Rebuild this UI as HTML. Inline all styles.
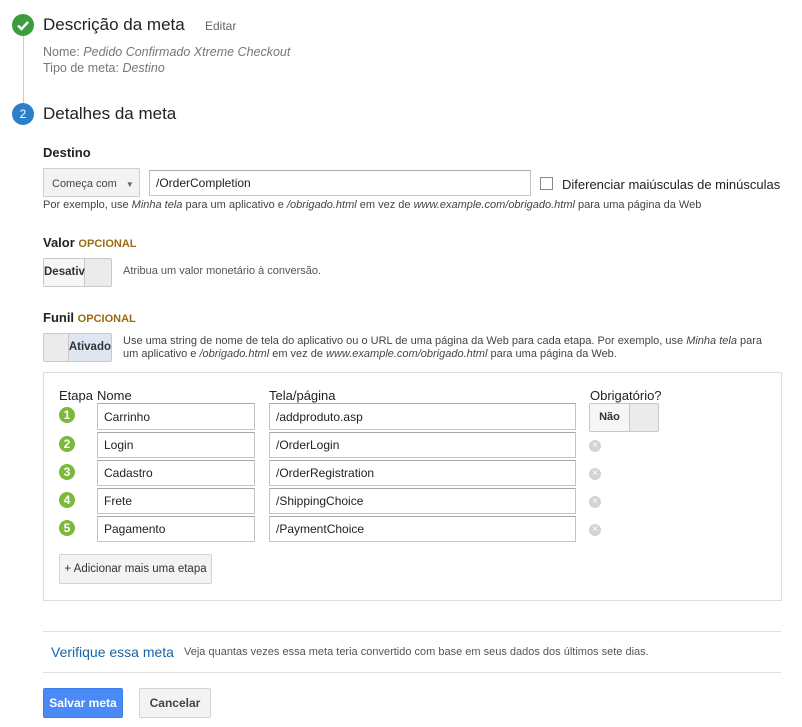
<!DOCTYPE html>
<html><head><meta charset="utf-8"><style>
*{box-sizing:border-box;margin:0;padding:0}
body{width:802px;height:727px;background:#fff;font-family:"Liberation Sans",Arial,sans-serif;color:#222;position:relative;overflow:hidden}
.a{position:absolute;white-space:nowrap}
.inp{position:absolute;border:1px solid #c4c4c4;border-top-color:#a8a8a8;background:#fff;font-size:12px;padding-left:6px;display:flex;align-items:center}
.tog{position:absolute;border:1px solid #c8c8c8;border-radius:2px;background:#ebebeb;display:flex;font-size:11px;font-weight:bold;color:#333}
.n{position:absolute;width:16px;height:16px;border-radius:50%;background:#7cb83b;color:#fff;font-size:12px;font-weight:bold;text-align:center;line-height:16px}
.x{position:absolute;width:12px;height:12px;border-radius:50%;background:#d4d4d4;color:#fff;font-size:10px;text-align:center;line-height:12px}
.btn{position:absolute;border:1px solid #d4d4d4;background:#f3f3f3;border-radius:2px;font-size:12px;font-weight:bold;color:#444;display:flex;align-items:center;justify-content:center}
.hr{position:absolute;left:43px;width:738px;height:1px;background:#e0e0e0}
.op{color:#9b6a12;font-size:11px;font-weight:bold}
</style></head><body>
<div class="a" style="left:23px;top:36px;width:1px;height:68px;background:#ccc"></div>
<svg class="a" style="left:12px;top:14px" width="22" height="22"><circle cx="11" cy="11" r="11" fill="#3b9d3b"/><path d="M6 11.5l3.5 3.5 6.5-7" stroke="#fff" stroke-width="2.4" fill="none"/></svg>
<div class="a" style="left:43px;top:15px;font-size:17px;color:#222">Descrição da meta</div>
<div class="a" style="left:205px;top:19px;font-size:12px;color:#666">Editar</div>
<div class="a" style="left:43px;top:45px;font-size:12.5px;color:#777">Nome: <i>Pedido Confirmado Xtreme Checkout</i></div>
<div class="a" style="left:43px;top:61px;font-size:12.5px;color:#777">Tipo de meta: <i>Destino</i></div>
<div class="a" style="left:12px;top:103px;width:22px;height:22px;border-radius:50%;background:#2a7fc7;color:#fff;font-size:12px;text-align:center;line-height:22px">2</div>
<div class="a" style="left:43px;top:104px;font-size:17px">Detalhes da meta</div>
<div class="a" style="left:43px;top:145px;font-size:13px;font-weight:bold">Destino</div>
<div class="a" style="left:43px;top:168px;width:97px;height:29px;border:1px solid #d0d0d0;background:#f3f3f3;font-size:11px;color:#444;padding:9px 0 0 8px">Começa com <span style="font-size:8px;color:#666;margin-left:6px">▼</span></div>
<div class="inp" style="left:149px;top:170px;width:382px;height:26px">/OrderCompletion</div>
<div class="a" style="left:540px;top:177px;width:13px;height:13px;border:1px solid #888;background:#fff"></div>
<div class="a" style="left:562px;top:177px;font-size:13px">Diferenciar maiúsculas de minúsculas</div>
<div class="a" style="left:43px;top:199px;font-size:11px;color:#444">Por exemplo, use <i>Minha tela</i> para um aplicativo e <i>/obrigado.html</i> em vez de <i>www.example.com/obrigado.html</i> para uma página da Web</div>
<div class="a" style="left:43px;top:235px;font-size:13px;font-weight:bold">Valor <span class="op">OPCIONAL</span></div>
<div class="tog" style="left:43px;top:258px;width:69px;height:29px"><div style="width:41px;background:#f6f6f6;border-right:1px solid #c8c8c8;line-height:27px;padding-left:0;font-size:11.5px">Desativ</div></div>
<div class="a" style="left:123px;top:265px;font-size:11px;color:#555">Atribua um valor monetário à conversão.</div>
<div class="a" style="left:43px;top:310px;font-size:13px;font-weight:bold">Funil <span class="op">OPCIONAL</span></div>
<div class="tog" style="left:43px;top:333px;width:69px;height:29px"><div style="width:28px;border-right:1px solid #c8c8c8"></div><div style="flex:1;background:#dfe6f1;line-height:27px;padding-left:0;font-size:11.5px">Ativado</div></div>
<div class="a" style="left:123px;top:335px;font-size:11px;color:#444;line-height:13px">Use uma string de nome de tela do aplicativo ou o URL de uma página da Web para cada etapa. Por exemplo, use <i>Minha tela</i> para<br>um aplicativo e <i>/obrigado.html</i> em vez de <i>www.example.com/obrigado.html</i> para uma página da Web.</div>
<div class="a" style="left:43px;top:372px;width:739px;height:229px;border:1px solid #ddd"></div>
<div class="a" style="left:59px;top:388px;font-size:13px">Etapa</div>
<div class="a" style="left:97px;top:388px;font-size:13px">Nome</div>
<div class="a" style="left:269px;top:388px;font-size:13px">Tela/página</div>
<div class="a" style="left:590px;top:388px;font-size:13px">Obrigatório?</div>

<div class="n" style="left:59px;top:407px">1</div>
<div class="inp" style="left:97px;top:403px;width:158px;height:27px">Carrinho</div>
<div class="inp" style="left:269px;top:403px;width:307px;height:27px">/addproduto.asp</div>
<div class="tog" style="left:589px;top:403px;width:70px;height:29px"><div style="width:40px;background:#f6f6f6;border-right:1px solid #c8c8c8;line-height:27px;text-align:center">Não</div></div>

<div class="n" style="left:59px;top:436px">2</div>
<div class="inp" style="left:97px;top:432px;width:158px;height:26px">Login</div>
<div class="inp" style="left:269px;top:432px;width:307px;height:26px">/OrderLogin</div>
<div class="x" style="left:589px;top:440px">×</div>

<div class="n" style="left:59px;top:464px">3</div>
<div class="inp" style="left:97px;top:460px;width:158px;height:26px">Cadastro</div>
<div class="inp" style="left:269px;top:460px;width:307px;height:26px">/OrderRegistration</div>
<div class="x" style="left:589px;top:468px">×</div>

<div class="n" style="left:59px;top:492px">4</div>
<div class="inp" style="left:97px;top:488px;width:158px;height:26px">Frete</div>
<div class="inp" style="left:269px;top:488px;width:307px;height:26px">/ShippingChoice</div>
<div class="x" style="left:589px;top:496px">×</div>

<div class="n" style="left:59px;top:520px">5</div>
<div class="inp" style="left:97px;top:516px;width:158px;height:26px">Pagamento</div>
<div class="inp" style="left:269px;top:516px;width:307px;height:26px">/PaymentChoice</div>
<div class="x" style="left:589px;top:524px">×</div>

<div class="btn" style="left:59px;top:554px;width:153px;height:30px;font-weight:normal;color:#333;font-size:11.5px">+ Adicionar mais uma etapa</div>
<div class="hr" style="top:631px"></div>
<div class="a" style="left:51px;top:644px;font-size:14px;color:#1a62a8">Verifique essa meta</div>
<div class="a" style="left:184px;top:646px;font-size:11px;color:#555">Veja quantas vezes essa meta teria convertido com base em seus dados dos últimos sete dias.</div>
<div class="hr" style="top:672px"></div>
<div class="btn" style="left:43px;top:688px;width:80px;height:30px;background:#4a8af4;border-color:#3b7de8;color:#fff">Salvar meta</div>
<div class="btn" style="left:139px;top:688px;width:72px;height:30px">Cancelar</div>
</body></html>
